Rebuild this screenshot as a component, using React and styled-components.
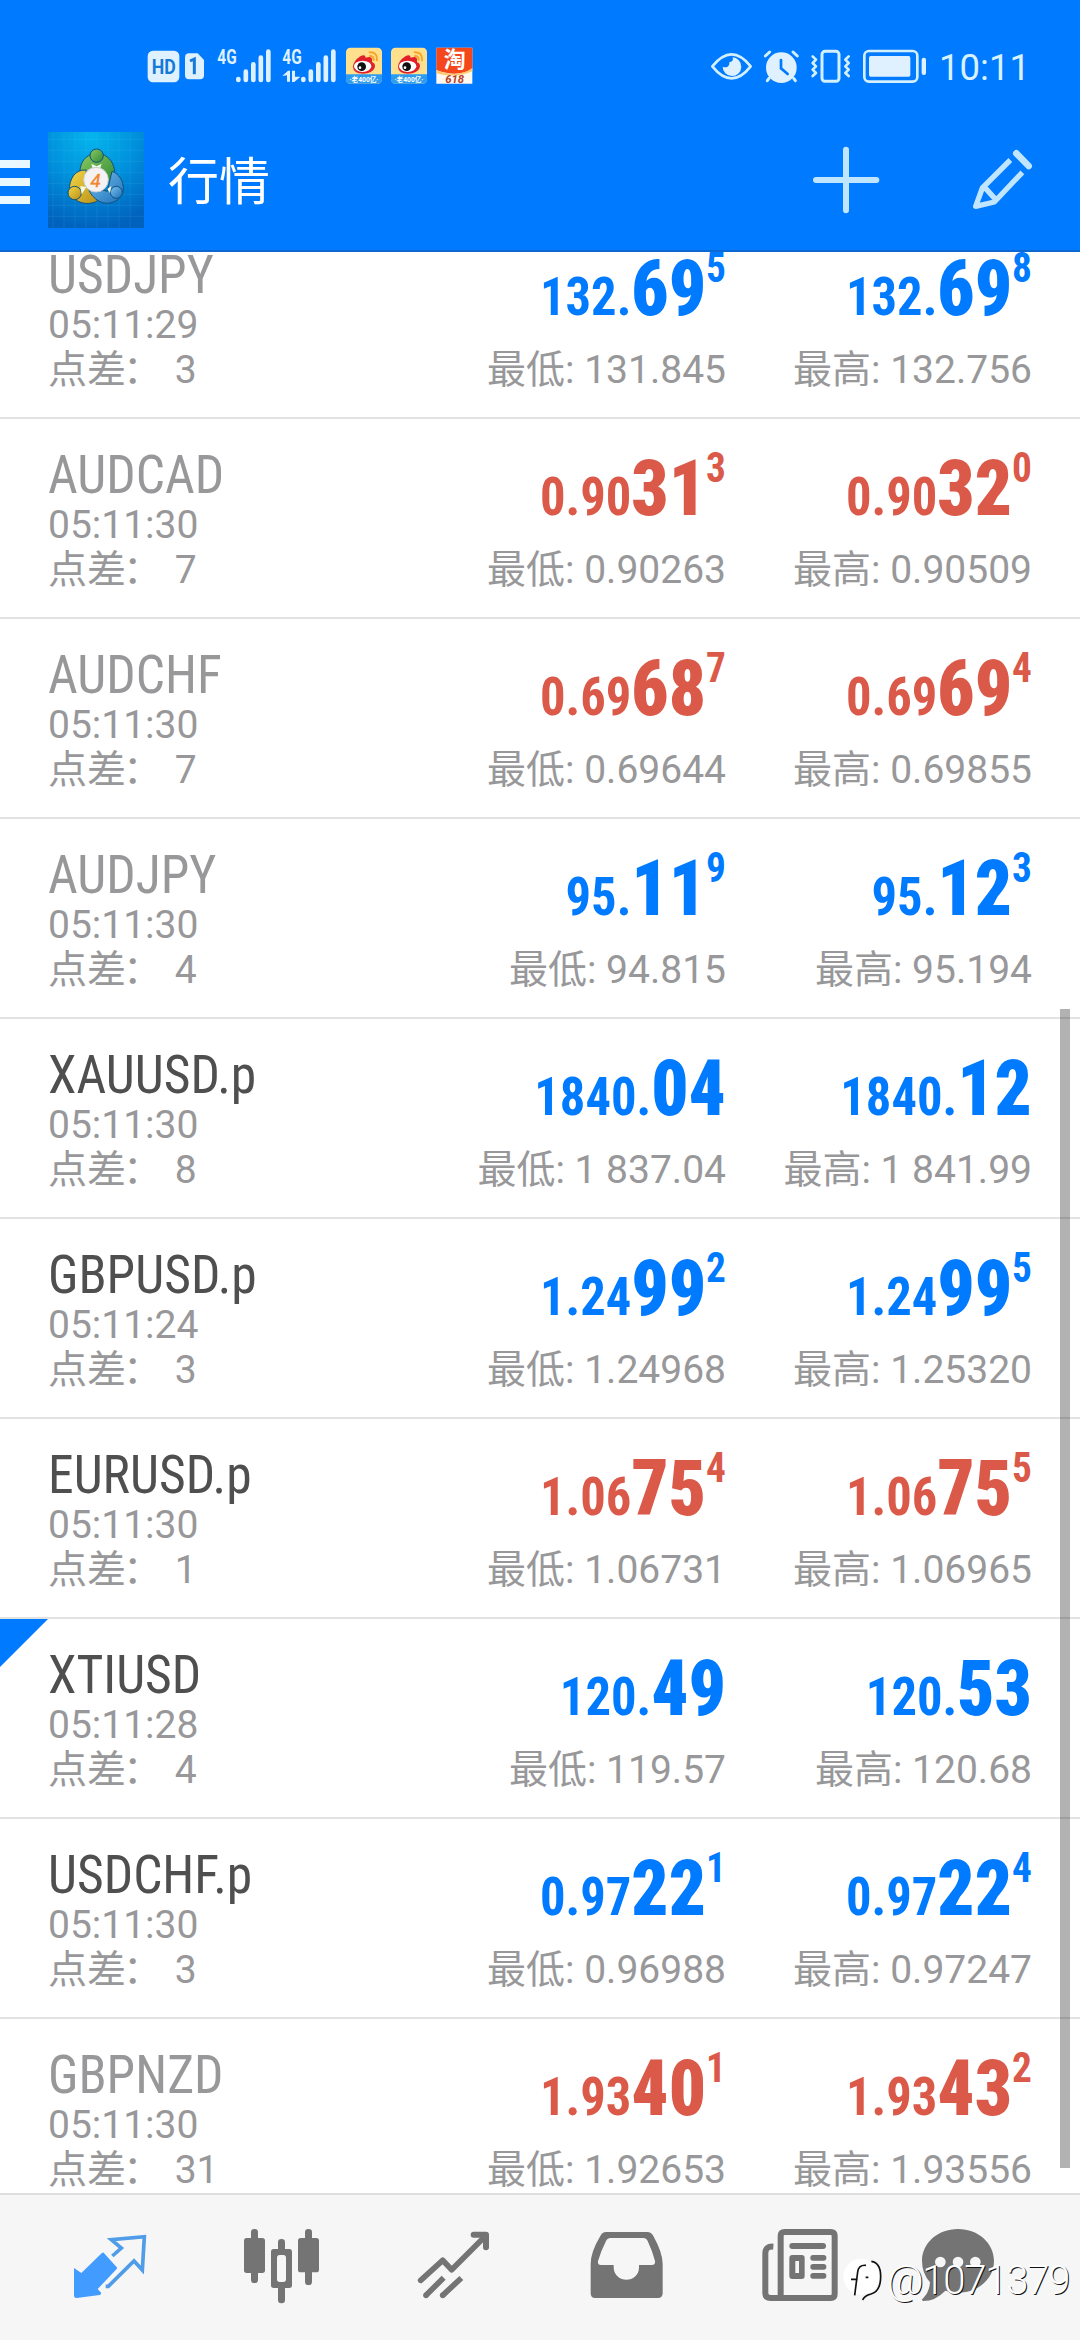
import React from "react";
import styled, { createGlobalStyle, css } from "styled-components";

const BLUE = "#007aff";
const RED = "#db5949";
const GRAY = "#98989a";
const ICON = "#747474";

const GlobalStyle = createGlobalStyle`
  * {
    box-sizing: border-box;
  }
  body {
    margin: 0;
    background: #fff;
    font-family: Roboto, "Noto Sans CJK SC", sans-serif;
  }
  svg {
    display: block;
    flex: none;
  }
`;

const condensed = css`
  font-family: "Roboto Condensed", Roboto, sans-serif;
  font-stretch: 75%;
`;

const Screen = styled.div`
  position: relative;
  display: flex;
  flex-direction: column;
  width: 1080px;
  height: 2340px;
  overflow: hidden;
`;

const Header = styled.header`
  flex: none;
  height: 252px;
  background: ${BLUE};
  border-bottom: 2px solid #0c68d2;
`;

const StatusBar = styled.div`
  display: flex;
  height: 108px;
  padding: 30px 50px 0 145px;
`;

const StatusSpacer = styled.div`
  flex: 1;
`;

const Clock = styled.span`
  width: 100px;
  padding-top: 14px;
  text-align: right;
  white-space: nowrap;
  font-size: 36.5px;
  line-height: 48px;
  color: #d8f2ff;
`;

const Toolbar = styled.div`
  display: flex;
  align-items: center;
  height: 144px;
  padding-right: 45px;
`;

const MenuBars = styled.div`
  display: flex;
  flex-direction: column;
  gap: 10px;
  width: 30px;
  margin: 4px 18px 0 0;
  & > i {
    height: 8px;
    background: #e9f8ff;
  }
`;

const Title = styled.h1`
  flex: 1;
  margin: 6px 0 0 24px;
  font-size: 51px;
  font-weight: 400;
  line-height: 60px;
  color: #fff;
`;

const Actions = styled.div`
  display: flex;
  gap: 87px;
`;

const List = styled.main`
  position: relative;
  flex: 1;
  overflow: hidden;
`;

const Rows = styled.div`
  margin-top: -33px;
`;

const Row = styled.section`
  position: relative;
  display: grid;
  grid-template-columns: 1fr 306px 306px;
  height: 200px;
  padding: 0 48px;
  border-bottom: 2px solid #e2e2e2;
`;

const Marker = styled.i`
  position: absolute;
  top: 0;
  left: 0;
  border-top: 48px solid ${BLUE};
  border-right: 48px solid transparent;
`;

const Info = styled.div`
  padding-top: 29px;
  font-size: 39px;
  line-height: 45px;
  white-space: pre;
  color: ${GRAY};
  h2 {
    ${condensed}
    transform: scaleX(0.955);
    transform-origin: left;
    margin: 0 0 1px;
    font-size: 54px;
    font-weight: 400;
    line-height: 54px;
    color: ${(props) => (props.$active ? "#4f4f4f" : GRAY)};
  }
  p {
    margin: 0;
  }
`;

const Colon = styled.span`
  margin: 0 3px 0 -3px;
`;

const Quote = styled.div`
  padding-top: 31px;
  text-align: right;
  white-space: nowrap;
`;

const Price = styled.div`
  ${condensed}
  transform: scaleX(0.937);
  transform-origin: right;
  height: 78px;
  margin-bottom: 20px;
  font-size: 54px;
  font-weight: 700;
  line-height: 78px;
  color: ${(props) => (props.$down ? RED : BLUE)};
  b {
    font-size: 78px;
  }
  sup {
    font-size: 42px;
    line-height: 0;
    vertical-align: 33px;
  }
`;

const Extreme = styled.div`
  font-size: 39px;
  line-height: 45px;
  color: ${GRAY};
`;

const ScrollThumb = styled.div`
  position: absolute;
  top: 757px;
  right: 10px;
  width: 10px;
  height: 1159px;
  background: rgba(0, 0, 0, 0.3);
`;

const TabBar = styled.nav`
  flex: none;
  display: flex;
  gap: 92px;
  height: 147px;
  padding: 30px 0 0 70px;
  border-top: 2px solid #dedede;
  background: #f6f6f6;
  svg {
    overflow: visible;
  }
`;

const Watermark = styled.div`
  position: absolute;
  left: 842px;
  top: 2256px;
  display: flex;
  align-items: center;
  font-size: 40px;
  font-weight: 300;
  line-height: 50px;
  letter-spacing: -1.2px;
  color: #fff;
  text-shadow: 1px 1px 0 #111;
`;

const StatusIcon = ({ x, w, children }) => (
  <svg width={w / 3} height="75" viewBox={`${x} 0 ${w} 225`} fill="#dff1ff">
    {children}
  </svg>
);

const TabIcon = ({ x, y = 135, children }) => (
  <svg width="80" height="80" viewBox={`${x} ${y} 240 240`} fill={ICON}>
    {children}
  </svg>
);

const Signal = ({ x }) => (
  <g>
    {[140, 118, 96, 76, 58].map((top, i) => (
      <rect key={top} x={x + i * 22.5} y={top} width="14" height={157 - top} rx="7" />
    ))}
  </g>
);

const Weibo = ({ x }) => (
  <g transform={`translate(${x} 53)`}>
    <rect width="108" height="108" rx="13" fill="#ffe08c" />
    <path d="M0 80h108v15q0 13-13 13H13q-13 0-13-13z" fill="#2d9cf0" />
    <text x="54" y="103" textAnchor="middle" fontSize="20" fontWeight="700" fill="#fff">
      ·老400亿·
    </text>
    <path d="M21 57q2-18 22-31 15-8 16 4 17-6 19 4v9q12 5 8 17-6 17-35 18-29-1-30-21z" fill="#e1202c" />
    <ellipse cx="50" cy="56" rx="26" ry="17" fill="#fff" />
    <circle cx="47" cy="57" r="13" fill="#111" />
    <circle cx="42" cy="60" r="4" fill="#fff" />
    <path d="M71 14q24-1 22 24M72 25q11 0 11 12" fill="none" stroke="#f7a52d" strokeWidth="6" strokeLinecap="round" />
  </g>
);

const Logo = () => (
  <svg width="96" height="96" viewBox="144 66 288 288">
    <defs>
      <radialGradient id="sky" cx="45%" cy="5%" r="95%">
        <stop offset="0" stopColor="#05b5ec" />
        <stop offset="0.5" stopColor="#0090dc" />
        <stop offset="1" stopColor="#0062bd" />
      </radialGradient>
      <linearGradient id="green" x1="0" y1="0" x2="1" y2="1">
        <stop offset="0" stopColor="#8ccb62" />
        <stop offset="1" stopColor="#2f8a36" />
      </linearGradient>
      <linearGradient id="gold" x1="0" y1="0" x2="1" y2="1">
        <stop offset="0" stopColor="#f4d743" />
        <stop offset="1" stopColor="#b8901a" />
      </linearGradient>
      <linearGradient id="water" x1="0" y1="0" x2="1" y2="1">
        <stop offset="0" stopColor="#7cc4ee" />
        <stop offset="1" stopColor="#1b6fb9" />
      </linearGradient>
    </defs>
    <path d="M144 66h288v288H144z" fill="url(#sky)" />
    <path
      d="M159 66v288M192 66v288M225 66v288M258 66v288M291 66v288M324 66v288M357 66v288M390 66v288M144 88h288M144 121h288M144 154h288M144 187h288M144 220h288M144 253h288M144 286h288M144 319h288"
      stroke="#6bd6ff"
      strokeOpacity="0.18"
      strokeWidth="2"
    />
    <g stroke="#12507c" strokeWidth="3">
      <path d="M240 186c0-75 104-75 104 6l-14 26-38-30-48 4z" fill="url(#green)" />
      <path d="M258 180c-34-2-50 28-50 60 4 28 40 50 78 36l12-8-34-36z" fill="url(#gold)" />
      <path d="M336 184c20 6 36 30 34 56-8 40-54 52-84 26-12-10-20-24-24-38l60 16z" fill="url(#water)" />
      <circle cx="290" cy="137" r="20" fill="url(#green)" />
      <circle cx="224" cy="249" r="20" fill="url(#gold)" />
      <circle cx="349" cy="247" r="18" fill="url(#water)" />
    </g>
    <path d="M274 161l16 8 15-8-6 18h-20zM241 228l18 3-14 22zM334 228l-12 9 8 12z" fill="#f0fbe8" />
    <circle cx="288" cy="209" r="37" fill="#f4f2f3" stroke="#c9cbd0" strokeWidth="3" />
    <text x="287" y="230" textAnchor="middle" fontSize="56" fontStyle="italic" fill="#f0872e" stroke="#f0872e" strokeWidth="1">
      4
    </text>
  </svg>
);

const quotes = [
  { symbol: "USDJPY", time: "05:11:29", spread: "3", bid: ["132.", "69", "5"], ask: ["132.", "69", "8"], low: "131.845", high: "132.756" },
  { symbol: "AUDCAD", time: "05:11:30", spread: "7", bid: ["0.90", "31", "3"], ask: ["0.90", "32", "0"], low: "0.90263", high: "0.90509", down: true },
  { symbol: "AUDCHF", time: "05:11:30", spread: "7", bid: ["0.69", "68", "7"], ask: ["0.69", "69", "4"], low: "0.69644", high: "0.69855", down: true },
  { symbol: "AUDJPY", time: "05:11:30", spread: "4", bid: ["95.", "11", "9"], ask: ["95.", "12", "3"], low: "94.815", high: "95.194" },
  { symbol: "XAUUSD.p", time: "05:11:30", spread: "8", bid: ["1840.", "04"], ask: ["1840.", "12"], low: "1 837.04", high: "1 841.99", active: true },
  { symbol: "GBPUSD.p", time: "05:11:24", spread: "3", bid: ["1.24", "99", "2"], ask: ["1.24", "99", "5"], low: "1.24968", high: "1.25320", active: true },
  { symbol: "EURUSD.p", time: "05:11:30", spread: "1", bid: ["1.06", "75", "4"], ask: ["1.06", "75", "5"], low: "1.06731", high: "1.06965", active: true, down: true },
  { symbol: "XTIUSD", time: "05:11:28", spread: "4", bid: ["120.", "49"], ask: ["120.", "53"], low: "119.57", high: "120.68", active: true, marked: true },
  { symbol: "USDCHF.p", time: "05:11:30", spread: "3", bid: ["0.97", "22", "1"], ask: ["0.97", "22", "4"], low: "0.96988", high: "0.97247", active: true },
  { symbol: "GBPNZD", time: "05:11:30", spread: "31", bid: ["1.93", "40", "1"], ask: ["1.93", "43", "2"], low: "1.92653", high: "1.93556", down: true },
];

const QuoteCell = ({ price, down, label, value }) => (
  <Quote>
    <Price $down={down}>
      {price[0]}
      <b>{price[1]}</b>
      {price[2] && <sup>{price[2]}</sup>}
    </Price>
    <Extreme>{`${label}: ${value}`}</Extreme>
  </Quote>
);

const QuoteRow = ({ item }) => (
  <Row>
    {item.marked && <Marker />}
    <Info $active={item.active}>
      <h2>{item.symbol}</h2>
      <p>{item.time}</p>
      <p>
        点差<Colon>：</Colon>
        {` ${item.spread}`}
      </p>
    </Info>
    <QuoteCell price={item.bid} down={item.down} label="最低" value={item.low} />
    <QuoteCell price={item.ask} down={item.down} label="最高" value={item.high} />
  </Row>
);

const App = () => {
  return (
    <Screen>
      <GlobalStyle />
      <Header>
        <StatusBar>
          <StatusIcon x={45} w={111}>
            <rect x="53" y="62" width="95" height="95" rx="16" />
            <text x="65" y="132" fontSize="58" fontWeight="700" textLength="72" lengthAdjust="spacingAndGlyphs" fill="#1479d8">
              HD
            </text>
          </StatusIcon>
          <StatusIcon x={156} w={90}>
            <path d="M177 70h26l19 20v46q0 12-12 12h-33q-12 0-12-12V82q0-12 12-12z" />
            <path d="M180 93l13-6v46" fill="none" stroke="#1479d8" strokeWidth="9" />
          </StatusIcon>
          <StatusIcon x={246} w={198}>
            <text x="262" y="101" fontSize="58" fontWeight="700" textLength="58" lengthAdjust="spacingAndGlyphs">
              4G
            </text>
            <Signal x={318} />
          </StatusIcon>
          <StatusIcon x={444} w={192}>
            <text x="457" y="101" fontSize="58" fontWeight="700" textLength="58" lengthAdjust="spacingAndGlyphs">
              4G
            </text>
            <path d="M457 138l17-16h6v33h-9v-19zM486 122h9v18h16l-18 16h-7z" />
            <Signal x={513} />
          </StatusIcon>
          <StatusIcon x={636} w={270}>
            <Weibo x={648} />
            <Weibo x={783} />
          </StatusIcon>
          <StatusIcon x={906} w={135}>
            <path d="M919 53h108v108H919z" fill="#fff8ee" />
            <path d="M919 53h108v62q-40 30-108 5z" fill="#f4471c" />
            <path d="M919 120q60 26 108-5v9q-50 22-108 6z" fill="#ffc86b" />
            <text x="974" y="112" textAnchor="middle" fontSize="66" fontWeight="700" fill="#fff">
              淘
            </text>
            <text x="974" y="159" textAnchor="middle" fontSize="34" fontStyle="italic" fontWeight="700" fill="#b5402a">
              618
            </text>
          </StatusIcon>
          <StatusSpacer />
          <StatusIcon x={51} w={150}>
            <path d="M67 109q58-72 115 0q-57 72-115 0z" fill="none" stroke="#d3f0ff" strokeWidth="8" strokeLinejoin="round" />
            <path d="M127 82a28 28 0 1 1-29 28c12 6 22-2 20-14 8 2 14-8 9-14z" />
          </StatusIcon>
          <StatusIcon x={201} w={147}>
            <circle cx="274" cy="113" r="46" />
            <path d="M226 78l13-12M322 78l-13-12M237 145l-5 7M311 145l5 7" stroke="#d3f0ff" strokeWidth="9" strokeLinecap="round" />
            <path d="M273 90v25l20 17" fill="none" stroke={BLUE} strokeWidth="8" strokeLinecap="round" />
          </StatusIcon>
          <StatusIcon x={348} w={147}>
            <g fill="none" stroke="#d3f0ff" strokeLinecap="round" strokeLinejoin="round">
              <rect x="396" y="64" width="51" height="90" rx="9" strokeWidth="9" />
              <path d="M368 79l10 10-10 10 10 10-10 10 10 10-10 9M476 79l-10 10 10 10-10 10 10 10-10 10 10 9" strokeWidth="8" />
            </g>
          </StatusIcon>
          <StatusIcon x={495} w={225}>
            <rect x="523" y="63" width="159" height="92" rx="14" fill="none" stroke="#d3f0ff" strokeWidth="8" />
            <rect x="537" y="78" width="124" height="62" rx="5" />
            <rect x="695" y="83" width="13" height="52" rx="6" />
          </StatusIcon>
          <Clock>10:11</Clock>
        </StatusBar>
        <Toolbar>
          <MenuBars>
            <i />
            <i />
            <i />
          </MenuBars>
          <Logo />
          <Title>行情</Title>
          <Actions>
            <svg width="72" height="72" viewBox="150 102 216 216">
              <path d="M258 119v182M168 210h181" stroke="#bfe5ff" strokeWidth="18" strokeLinecap="round" />
            </svg>
            <svg width="66" height="72" viewBox="627 102 198 216" fill="none" stroke="#bfe5ff" strokeWidth="16" strokeLinejoin="round">
              <path d="M751 150l-84 84-20 55 56-13 84-89M672 230l32 35" />
              <path d="M769 130l37 38" strokeWidth="20" strokeLinecap="round" />
            </svg>
          </Actions>
        </Toolbar>
      </Header>
      <List>
        <Rows>
          {quotes.map((item) => (
            <QuoteRow key={item.symbol} item={item} />
          ))}
        </Rows>
        <ScrollThumb />
      </List>
      <TabBar>
        <TabIcon x={210}>
          <path
            d="M311 218q-3-1-6 2l-61 59-22-15v84q0 6 8 6l69-9q7-2 3-8l-9-10 57-60q3-3-1-7z"
            fill="#429bff"
          />
          <path d="M337 228l27-24-30-25 99-9-6 100-25-27-77 76h-8" fill="none" stroke="#4f9ce8" strokeWidth="11" />
        </TabIcon>
        <TabIcon x={726}>
          <rect x="732" y="174" width="63" height="105" rx="8" />
          <rect x="753" y="147" width="21" height="162" rx="10" />
          <rect x="894" y="174" width="63" height="103" rx="8" />
          <rect x="915" y="147" width="21" height="168" rx="10" />
          <rect x="834" y="177" width="21" height="193" rx="10" />
          <rect x="813" y="207" width="63" height="117" rx="8" />
          <rect x="831" y="225" width="27" height="81" rx="8" fill="#f6f6f6" />
        </TabIcon>
        <TabIcon x={162}>
          <g fill="none" stroke={ICON} strokeWidth="17" strokeLinejoin="round">
            <path d="M182 301l66-60 27 28 102-102" strokeLinecap="round" />
            <path d="M341 164h37v38" strokeWidth="18" strokeLinecap="round" />
            <path d="M198 346l53-53M248 346l56-52" />
          </g>
          <circle cx="198" cy="346" r="8.500" />
          <circle cx="248" cy="346" r="8.500" />
        </TabIcon>
        <TabIcon x={678}>
          <path d="M738 156h124q12 0 18 12 28 50 28 84v88q0 14-14 14H705q-13 0-13-14v-88q0-36 29-84 6-12 17-12z" />
          <path
            d="M752 174h98q9 0 13 9 15 32 22 60 2 12-10 12h-38v7c0 50-75 50-76 0v-7h-38q-11 0-9-12 8-28 24-60 4-9 14-9z"
            fill="#f6f6f6"
          />
        </TabIcon>
        <TabIcon x={114} y={255}>
          <path d="M160 320q-24-2-24 20v120q0 14 16 14h180q12 0 12-12V288q0-12-12-12H194q-12 0-12 12v186" fill="none" stroke={ICON} strokeWidth="18" />
          <rect x="208" y="309" width="110" height="18" rx="9" />
          <rect x="208" y="345" width="46" height="72" rx="9" />
          <rect x="226" y="363" width="11" height="36" fill="#f6f6f6" />
          <rect x="271" y="345" width="48" height="17" rx="8" />
          <rect x="271" y="372" width="48" height="17" rx="8" />
          <rect x="271" y="399" width="48" height="17" rx="8" />
        </TabIcon>
        <TabIcon x={630} y={255}>
          <path d="M714 267c61 0 108 43 108 96s-47 95-108 95q-20 0-38-6-30 31-66 31-8-3 0-9 18-18 20-47-24-27-24-64c0-53 47-96 108-96z" />
          <g fill="#f6f6f6">
            <circle cx="661" cy="366" r="16" />
            <circle cx="714" cy="366" r="16" />
            <circle cx="766" cy="366" r="16" />
          </g>
        </TabIcon>
      </TabBar>
      <Watermark>
        <svg width="45" height="50" viewBox="372 360 135 150">
          <circle cx="430" cy="422" r="54" fill="#fff" />
          <path d="M460 376q28 4 28 45 0 45-29 53-20 5-25 18" fill="none" stroke="#111" strokeWidth="5" />
          <path d="M399 430h20M444 388q-22-2-25 20l-9 70M443 424h8" fill="none" stroke="#111" strokeWidth="5" />
        </svg>
        @1071379
      </Watermark>
    </Screen>
  );
};

export default App;
